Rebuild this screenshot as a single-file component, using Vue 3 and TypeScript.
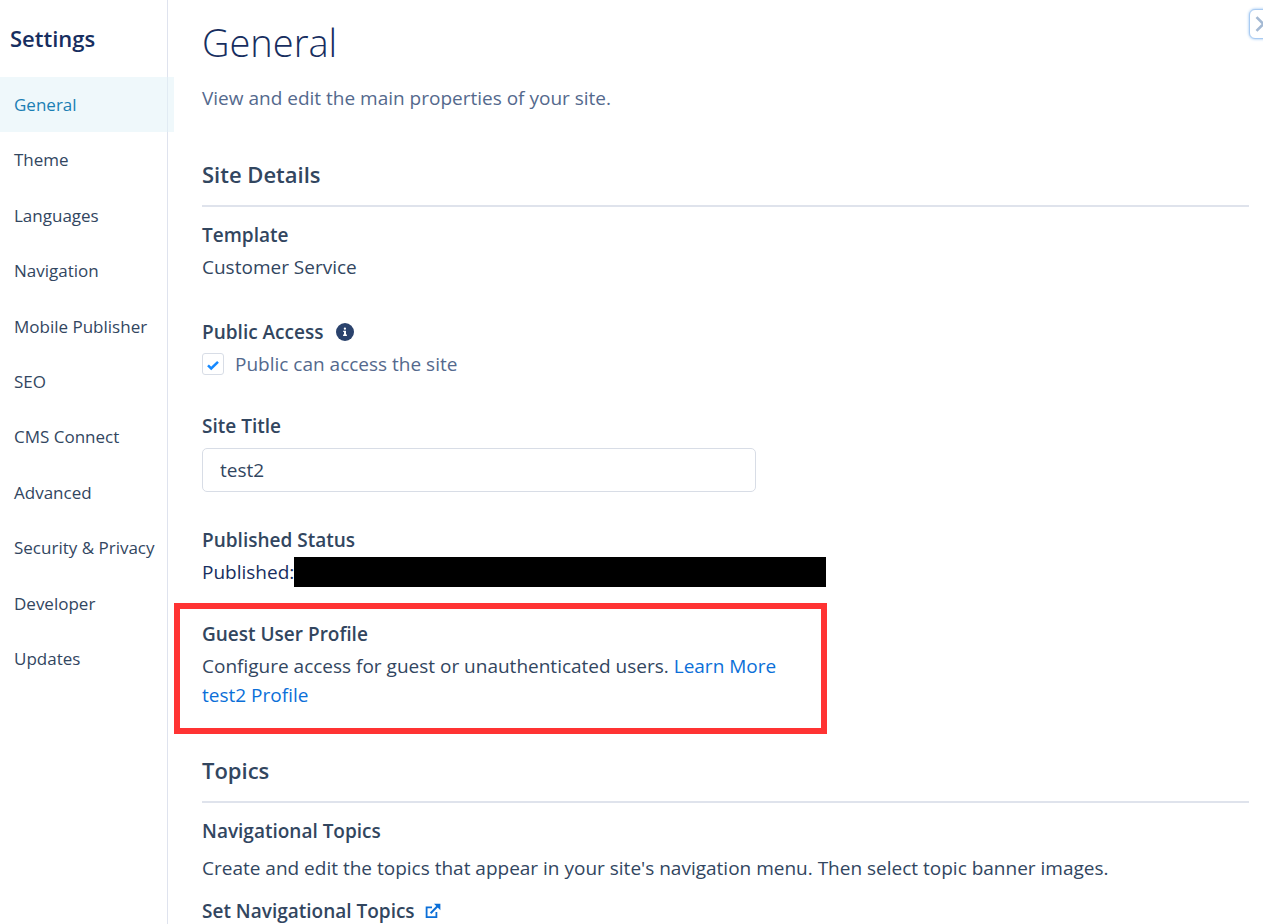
<script setup lang="ts">
import { ref } from 'vue'

const items: string[] = [
  'General',
  'Theme',
  'Languages',
  'Navigation',
  'Mobile Publisher',
  'SEO',
  'CMS Connect',
  'Advanced',
  'Security & Privacy',
  'Developer',
  'Updates',
]
const active = ref('General')
const publicAccess = ref(true)
const siteTitle = ref('test2')
</script>

<template>
  <div class="page">
    <aside class="sidebar">
      <h2 class="sidebar-title">Settings</h2>
      <nav class="menu" aria-label="Settings">
        <a
          v-for="item in items"
          :key="item"
          href="#"
          class="menu-item"
          :class="{ active: item === active }"
          @click.prevent="active = item"
        >{{ item }}</a>
      </nav>
    </aside>

    <main class="content">
      <button class="panel-toggle" type="button" aria-label="Close settings">
        <svg viewBox="0 0 28 28" width="28" height="28" aria-hidden="true">
          <path d="M6.5 7.2L20.1 20.8M20.1 7.2L6.5 20.8" fill="none" stroke="#a4b9d3" stroke-width="2.6" />
        </svg>
      </button>

      <h1>General</h1>
      <p class="intro">View and edit the main properties of your site.</p>

      <h2 class="section-title">Site Details</h2>

      <section class="field">
        <h3>Template</h3>
        <p>Customer Service</p>
      </section>

      <section class="field access">
        <h3 class="with-icon">
          Public Access
          <svg class="info" viewBox="0 0 18 18" width="18" height="18" aria-hidden="true">
            <circle cx="9" cy="9" r="9" fill="#2a426c" />
            <rect x="7.8" y="4.6" width="2.2" height="2.2" rx="1" fill="#fff" />
            <path d="M7.2 7.8h2.8v3.8h.9v1.3H7.1v-1.3h.9V9h-.8z" fill="#fff" />
          </svg>
        </h3>
        <label class="check">
          <span class="check-box">
            <input v-model="publicAccess" type="checkbox" />
            <svg v-if="publicAccess" viewBox="0 0 22 22" width="22" height="22" aria-hidden="true">
              <path d="M6 12.4l3.2 3.1L16 8.8" fill="none" stroke="#1589ff" stroke-width="2.5" />
            </svg>
          </span>
          Public can access the site
        </label>
      </section>

      <section class="field">
        <label class="field-label" for="site-title">Site Title</label>
        <input id="site-title" v-model="siteTitle" class="text-input" type="text" />
      </section>

      <section class="field">
        <h3>Published Status</h3>
        <div class="status"><span>Published:</span><span class="redacted"></span></div>
      </section>

      <section class="field guest">
        <h3>Guest User Profile</h3>
        <p>Configure access for guest or unauthenticated users. <a href="#">Learn More</a></p>
        <a class="profile" href="#">test2 Profile</a>
      </section>

      <h2 class="section-title topics-title">Topics</h2>

      <section class="field">
        <h3>Navigational Topics</h3>
        <p class="topics-text">Create and edit the topics that appear in your site's navigation menu. Then select topic banner images.</p>
        <h3 class="with-icon set-topics">
          Set Navigational Topics
          <a href="#" aria-label="Open navigational topics">
            <svg viewBox="0 0 16 16" width="16" height="16" aria-hidden="true">
              <path d="M7 4.4H1.6v9.8h9.8V9" fill="none" stroke="#0b6fd8" stroke-width="1.8" />
              <path d="M5.6 10.2L13 2.8" fill="none" stroke="#0b6fd8" stroke-width="2" />
              <path d="M9 .8h6.4v6.4z" fill="#0b6fd8" />
            </svg>
          </a>
        </h3>
      </section>
    </main>
  </div>
</template>

<style>
html,
body {
  overflow: hidden;
}
</style>

<style scoped>
* {
  box-sizing: border-box;
}

.page {
  display: flex;
  height: 100vh;
  background: #fff;
  color: #32465f;
  font-family: "Open Sans", "Noto Sans", sans-serif;
  font-size: 19px;
  line-height: 28px;
}

h1,
h2,
h3,
p {
  margin: 0;
}

a {
  color: #0b6fd8;
  text-decoration: none;
}

.sidebar {
  flex: 0 0 168px;
  border-right: 1px solid #dfe3ee;
}

.sidebar-title {
  padding: 24px 10px 25px;
  color: #172e60;
  font-size: 22px;
  font-weight: 600;
}

.menu {
  display: grid;
  grid-auto-rows: 1fr;
  height: 610px;
  margin-right: -7px;
}

.menu-item {
  display: flex;
  align-items: center;
  padding-left: 14px;
  color: #32465f;
  font-size: 17px;
  line-height: 24px;
  white-space: nowrap;
}

.menu-item.active {
  background: rgba(226, 243, 248, 0.55);
  color: #1b7fb4;
}

.content {
  position: relative;
  flex: 1;
  min-width: 0;
  overflow: hidden;
  padding: 17px 14px 0 34px;
}

.panel-toggle {
  position: absolute;
  top: 9px;
  right: -16px;
  width: 30px;
  height: 30px;
  padding: 0;
  border: 1px solid #a9cbf2;
  border-radius: 6px;
  background: #fff;
  box-shadow: 0 0 3px #8fbdf0;
}

.panel-toggle svg {
  display: block;
}

h1 {
  color: #172e60;
  font-size: 38px;
  font-weight: 300;
  line-height: 50px;
}

.intro {
  margin-top: 17px;
  color: #54698d;
}

.section-title {
  margin-top: 48px;
  padding-bottom: 17px;
  border-bottom: 2px solid #dfe3ec;
  font-size: 22px;
  font-weight: 600;
}

.field {
  display: flex;
  flex-direction: column;
  align-items: flex-start;
  gap: 4px;
  margin-top: 34px;
}

.section-title + .field {
  margin-top: 14px;
}

.access {
  margin-top: 37px;
}

h3,
.field-label {
  font-size: 19px;
  font-weight: 600;
}

.with-icon {
  display: flex;
  align-items: center;
  gap: 13px;
}

.with-icon svg {
  display: block;
}

.check {
  display: flex;
  align-items: center;
  gap: 11px;
  color: #54698d;
}

.check-box {
  display: grid;
  width: 22px;
  height: 22px;
}

.check-box > * {
  grid-area: 1 / 1;
}

.check-box svg {
  pointer-events: none;
}

.check-box input {
  width: 22px;
  height: 22px;
  margin: 0;
  appearance: none;
  border: 1px solid #d8dde6;
  border-radius: 3px;
  background: #fff;
}

.text-input {
  width: 100%;
  max-width: 554px;
  height: 44px;
  margin-top: 4px;
  padding: 0 17px;
  border: 1px solid #d8dde6;
  border-radius: 5px;
  background: #fff;
  color: #32465f;
  font: inherit;
}

.status {
  display: flex;
  width: 100%;
  max-width: 624px;
  color: #172e60;
}

.redacted {
  flex: 1;
  height: 30px;
  margin: -1px 0;
  background: #000;
}

.guest {
  max-width: 653px;
  margin-top: 17px;
  margin-left: -28px;
  padding: 11px 22px 19px;
  border: 6px solid #ff3333;
}

.profile {
  margin-top: -3px;
}

.topics-title {
  margin-top: 22px;
}

.topics-text {
  margin-top: 5px;
}

.set-topics {
  gap: 10px;
  margin-top: 11px;
}
</style>
